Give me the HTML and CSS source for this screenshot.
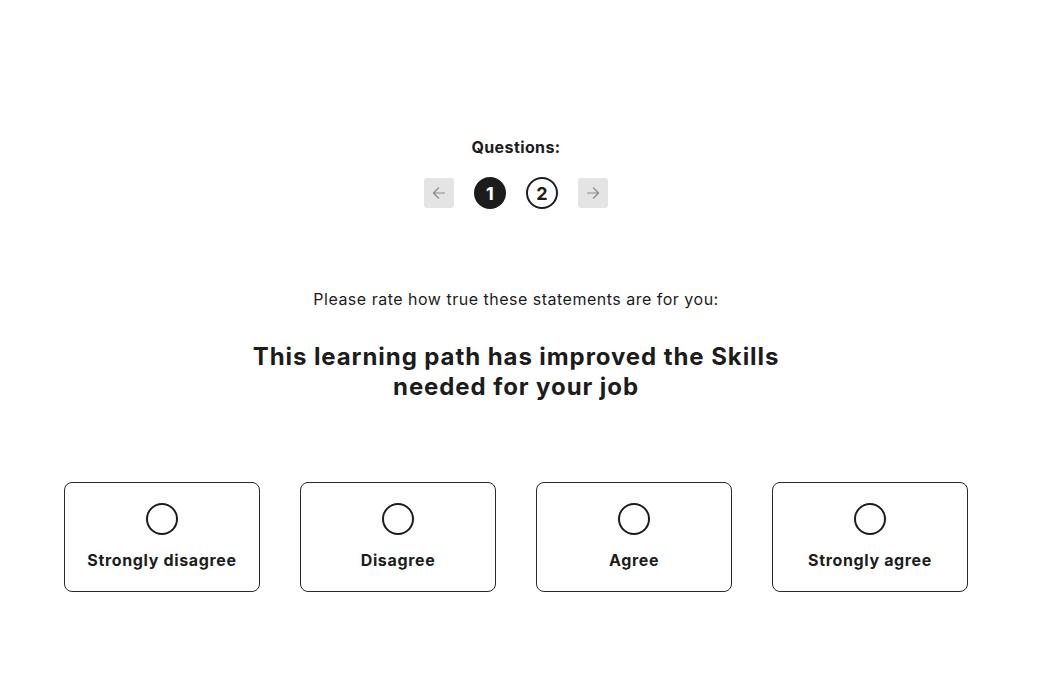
FILE: index.html
```html
<!DOCTYPE html>
<html lang="en">
<head>
<meta charset="utf-8">
<title>Survey</title>
<link rel="stylesheet" href="styles.css">
</head>
<body>
<main class="page">
  <section class="questions">
    <h2 class="questions-title">Questions:</h2>
    <nav class="pager">
      <button class="pager-arrow" aria-label="Previous">
        <svg width="14" height="14" viewBox="0 0 14 14" fill="none" stroke="#8a8a8a" stroke-width="1.2" stroke-linecap="round" stroke-linejoin="round"><path d="M12.5 7H1.5M6.5 2L1.5 7L6.5 12"/></svg>
      </button>
      <span class="pager-num active">1</span>
      <span class="pager-num">2</span>
      <button class="pager-arrow" aria-label="Next">
        <svg width="14" height="14" viewBox="0 0 14 14" fill="none" stroke="#8a8a8a" stroke-width="1.2" stroke-linecap="round" stroke-linejoin="round"><path d="M1.5 7H12.5M7.5 2L12.5 7L7.5 12"/></svg>
      </button>
    </nav>
  </section>

  <p class="prompt">Please rate how true these statements are for you:</p>
  <h1 class="statement">This learning path has improved the Skills<br>needed for your job</h1>

  <div class="options">
    <label class="option"><span class="radio"></span><span class="option-label">Strongly disagree</span></label>
    <label class="option"><span class="radio"></span><span class="option-label">Disagree</span></label>
    <label class="option"><span class="radio"></span><span class="option-label">Agree</span></label>
    <label class="option"><span class="radio"></span><span class="option-label">Strongly agree</span></label>
  </div>
</main>
</body>
</html>
```

FILE: styles.css
```css
* { box-sizing: border-box; }
html, body { margin: 0; padding: 0; background: #fff; }
body {
  font-family: Inter, "Liberation Sans", sans-serif;
  color: #1c1c1c;
}
.page {
  width: 1032px;
  padding: 137px 64px 0 64px;
  display: flex;
  flex-direction: column;
  align-items: center;
}
.questions {
  display: flex;
  flex-direction: column;
  align-items: center;
  gap: 20px;
}
.questions-title {
  margin: 0;
  font-size: 16px;
  line-height: 20px;
  font-weight: 700;
  letter-spacing: 0.4px;
}
.pager {
  display: flex;
  align-items: center;
  gap: 20px;
}
.pager-arrow {
  width: 30px;
  height: 30px;
  border: none;
  border-radius: 3px;
  background: #e4e4e4;
  padding: 0;
  display: flex;
  align-items: center;
  justify-content: center;
}
.pager-num {
  width: 32px;
  height: 32px;
  border-radius: 50%;
  border: 2px solid #1c1c1c;
  display: flex;
  align-items: center;
  justify-content: center;
  font-size: 18px;
  font-weight: 700;
}
.pager-num.active {
  background: #1c1c1c;
  color: #fff;
}
.prompt {
  margin: 80px 0 0;
  font-size: 16px;
  line-height: 20px;
  letter-spacing: 0.5px;
}
.statement {
  margin: 33px 0 0;
  font-size: 24px;
  line-height: 30px;
  font-weight: 700;
  text-align: center;
  letter-spacing: 0.92px;
}
.options {
  margin-top: 80px;
  display: grid;
  grid-template-columns: repeat(4, 196px);
  gap: 40px;
}
.option {
  height: 110px;
  border: 1px solid #2a2a2a;
  border-radius: 8px;
  padding-top: 20px;
  display: flex;
  flex-direction: column;
  align-items: center;
  gap: 15px;
}
.radio {
  width: 32px;
  height: 32px;
  border-radius: 50%;
  border: 2px solid #1c1c1c;
}
.option-label {
  font-size: 16px;
  line-height: 20px;
  font-weight: 700;
  letter-spacing: 0.65px;
}
```
